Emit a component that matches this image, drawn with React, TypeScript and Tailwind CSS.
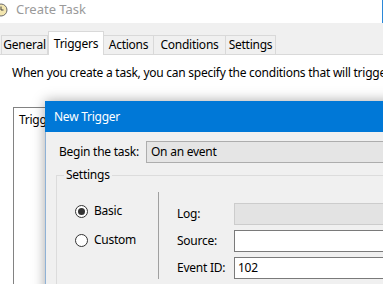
import React from 'react'

const tabs = [
  { label: 'General', w: 'w-[47px]' },
  { label: 'Triggers', w: 'w-[56px]', active: true },
  { label: 'Actions', w: 'w-[50px]' },
  { label: 'Conditions', w: 'w-[72px]' },
  { label: 'Settings', w: 'w-[50px]' },
]

function Radio({ checked, label }: { checked?: boolean; label: string }) {
  return (
    <div className="flex items-center h-[16px]">
      <span className="w-[13px] h-[13px] rounded-full border border-[#333] bg-white flex items-center justify-center">
        {checked && <span className="w-[7px] h-[7px] rounded-full bg-[#333]" />}
      </span>
      <span className="ml-[6px]">{label}</span>
    </div>
  )
}

export default function App() {
  return (
    <div className="relative w-[383px] h-[284px] overflow-hidden bg-white text-black text-[12px] leading-[16px] tracking-[-0.25px] font-[family-name:'Noto_Sans',sans-serif]">
      {/* Title bar */}
      <div className="h-[23px] flex items-center border-r border-[#2b88d8]">
        <svg width="14" height="14" viewBox="0 0 14 14" className="ml-[-6px] -mt-[4px]">
          <circle cx="7" cy="7" r="6" fill="#f3e6b0" stroke="#6b6b6b" strokeWidth="1" />
          <path d="M7 3.5V7h2.5" stroke="#444" strokeWidth="1" fill="none" />
        </svg>
        <span className="ml-[8px] text-[13px] tracking-normal text-[#9a9a9a] -mt-[6px]">Create Task</span>
      </div>

      {/* Tabs */}
      <div className="h-[32px] bg-[#f0f0f0] flex items-end pl-[1px] border-b border-[#d9d9d9]">
        {tabs.map(t =>
          t.active ? (
            <div
              key={t.label}
              className={`${t.w} h-[24px] -mb-px bg-white border border-b-0 border-[#d9d9d9] flex items-center justify-center z-10`}
            >
              {t.label}
            </div>
          ) : (
            <div
              key={t.label}
              className={`${t.w} h-[19px] bg-[#f0f0f0] border border-b-0 border-l-0 first:border-l border-[#d9d9d9] flex items-center justify-center`}
            >
              {t.label}
            </div>
          )
        )}
      </div>

      {/* Panel */}
      <div className="pt-[10px] pl-[12px]">
        <p className="whitespace-nowrap">When you create a task, you can specify the conditions that will trigger the task.</p>
        <div className="mt-[26px] ml-[1px] h-[200px] w-[360px] border border-[#828282] bg-white pt-[4px] pl-[5px]">
          Trigger
        </div>
      </div>

      {/* New Trigger dialog */}
      <div className="absolute left-[45px] top-[101px] w-[360px] h-[200px] bg-[#f0f0f0] shadow-[0_0_12px_rgba(0,0,0,0.35)] border-l border-[#8fb2d6]">
        <div className="h-[31px] bg-[#0078d7] text-white flex items-center pl-[9px] -ml-px">New Trigger</div>

        <div className="pt-[9px]">
          <div className="flex items-center h-[22px]">
            <span className="ml-[13px] w-[87px]">Begin the task:</span>
            <div className="flex-1 h-[22px] bg-[#e5e5e5] border border-[#adadad] flex items-center pl-[4px]">
              On an event
            </div>
          </div>

          <fieldset className="ml-[10px] mt-[4px] h-[140px] border border-[#dcdcdc]">
            <legend className="ml-[7px] px-[2px] leading-[16px]">Settings</legend>
            <div className="flex">
              <div className="w-[101px] pt-[20px] pl-[18px] flex flex-col gap-[13px]">
                <Radio checked label="Basic" />
                <Radio label="Custom" />
              </div>
              <div className="mt-[9px] flex-1 border-l border-[#a0a0a0] pl-[18px] pt-[11px] flex flex-col gap-[5px]">
                <div className="flex items-center h-[22px]">
                  <span className="w-[57px]">Log:</span>
                  <div className="flex-1 h-[22px] bg-[#e3e3e3] border border-[#cccccc]" />
                </div>
                <div className="flex items-center h-[22px]">
                  <span className="w-[57px]">Source:</span>
                  <div className="flex-1 h-[22px] bg-white border border-[#7a7a7a]" />
                </div>
                <div className="flex items-center h-[22px]">
                  <span className="w-[57px]">Event ID:</span>
                  <div className="flex-1 h-[22px] bg-white border border-[#7a7a7a] flex items-center pl-[3px]">102</div>
                </div>
              </div>
            </div>
          </fieldset>
        </div>
      </div>
    </div>
  )
}
